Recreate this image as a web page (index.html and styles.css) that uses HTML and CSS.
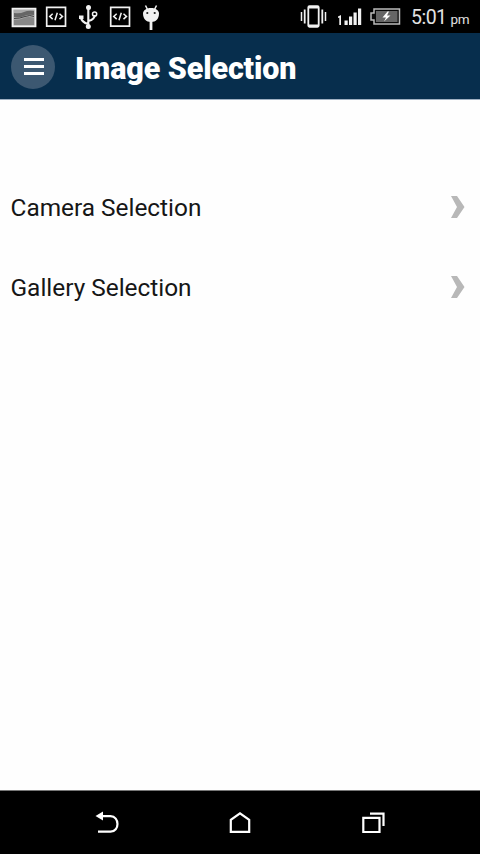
FILE: index.html
```html
<!DOCTYPE html>
<html lang="en">
<head>
<meta charset="utf-8">
<title>Image Selection</title>
<link rel="stylesheet" href="styles.css">
</head>
<body>
<div class="screen">
  <div class="status">
    <div class="notifications">
      <svg width="26" height="33" viewBox="11 0 26 33"><path d="M12.5 8.7h23v17.6h-23z" fill="#aaa" stroke="#f2f2f2" stroke-width="1.8"/><path d="M14 13q6 1 10-1t10-1v4q-6-1-10 1t-10 1z" fill="#666"/><path d="M14 20q6 0 10-2t10 0v7H14z" fill="#888"/><path d="M14 18.5q6 0 11-2t9 0" fill="none" stroke="#444"/></svg>
      <svg width="22" height="33" viewBox="45 0 22 33" fill="none" stroke="#f2f2f2"><path d="M46.7 7.3h18.8v18.8H46.7z" stroke-width="1.7"/><path d="M52.7 13.7l-3 2.7 3 2.7M59.5 13.7l3 2.7-3 2.7M57.3 12.7l-2.3 7.5" stroke-width="1.5"/></svg>
      <svg width="22" height="33" viewBox="77 0 22 33" fill="none" stroke="#f2f2f2" stroke-width="2.1"><path d="M88.3 9v17M88.3 24c-4-1-7-3-7.500-7M88.300 21c4-1 6.500-3 6.500-6"/><circle cx="88.500" cy="7.500" r="2.500" fill="#f2f2f2" stroke="none"/><circle cx="88.300" cy="26.500" r="2.500" fill="#f2f2f2" stroke="none"/><path d="M79 15.500h4.500v3.500H79z" fill="#f2f2f2" stroke="none"/><circle cx="94.600" cy="14" r="2.100" stroke-width="1.500"/></svg>
      <svg width="22" height="33" viewBox="45 0 22 33" fill="none" stroke="#f2f2f2"><path d="M46.7 7.3h18.8v18.8H46.7z" stroke-width="1.7"/><path d="M52.7 13.7l-3 2.7 3 2.7M59.5 13.7l3 2.7-3 2.7M57.3 12.7l-2.3 7.5" stroke-width="1.5"/></svg>
      <svg width="18" height="33" viewBox="143 0 18 33"><path d="M146.500 5.500l2 4M157.500 5.500l-2 4" stroke="#f2f2f2" stroke-width="1.500"/><path d="M144 13.500c0-3 3-5.500 8-5.500s8 2.500 8 5.500c0 5-3 8.500-8 8.500s-8-3.500-8-8.500z" fill="#f2f2f2"/><path d="M152 21v9" stroke="#f2f2f2" stroke-width="2.800"/><circle cx="148.300" cy="13" r="1.100" fill="#222"/><circle cx="155.700" cy="13" r="1.100" fill="#222"/></svg>
    </div>
    <div class="system">
      <svg class="vibrate" width="28" height="33" viewBox="299 0 28 33" fill="none" stroke="#f2f2f2"><rect x="308.300" y="6.200" width="10.400" height="20.600" rx="1.200" stroke-width="1.800"/><path d="M308 7.500h11M308 25.500h11" stroke-width="2"/><path d="M304.700 9.500v14M322.300 9.500v14" stroke-width="1.800"/><path d="M301.500 12v9M325.500 12v9" stroke-width="1.500"/></svg>
      <svg class="signal" width="25" height="33" viewBox="337 0 25 33" fill="#f2f2f2"><path d="M338 16.500l3-1.500v10h-1.700v-7.500l-1.300.5zM344.500 20.500h3.200V25h-3.200zM349 16.500h3.200V25H349zM353.500 12.500h3.200V25h-3.200zM358 8.500h3.200V25H358z"/></svg>
      <svg class="battery" width="32" height="33" viewBox="369 0 32 33"><path d="M374 9h25.500v15H374v-4h-3v-7h3z" fill="#0a0a0a" stroke="#bbb" stroke-width="1.500"/><path d="M376 11h21.500v11H376z" fill="#666"/><path d="M387.500 11.500l-5 6h3.500l-2 4 6.500-6H387l2-4z" fill="#fff"/></svg>
      <span class="clock">5:01</span><span class="meridiem">pm</span>
    </div>
  </div>
  <header class="header">
    <div class="menu"><i></i><i></i><i></i></div>
    <h1 class="title">Image Selection</h1>
  </header>
  <main class="list">
    <div class="row"><span>Camera Selection</span><svg width="16" height="24" viewBox="0 0 16 24"><path d="M1 1h6l7.500 11L7 23H1l6-11z" fill="#b8b8b8"/></svg></div>
    <div class="row"><span>Gallery Selection</span><svg width="16" height="24" viewBox="0 0 16 24"><path d="M1 1h6l7.500 11L7 23H1l6-11z" fill="#b8b8b8"/></svg></div>
  </main>
  <nav class="nav">
    <svg width="26" height="26" viewBox="94 809 26 26"><path d="M100 815.200h10.500c9.300 0 9.300 15.500 0 15.500H98" fill="none" stroke="#fff" stroke-width="2.200"/><path d="M95.500 815l7.500-4.500v9z" fill="#fff"/></svg>
    <svg width="26" height="26" viewBox="227 809 26 26"><path d="M230.800 830.900v-12l9.200-6.600 9.200 6.600v12z" fill="none" stroke="#fff" stroke-width="2.200"/></svg>
    <svg width="26" height="26" viewBox="360 809 26 26" fill="none" stroke="#fff" stroke-width="2.200"><path d="M363.300 816.800h16.200v14.200h-16.200zM370 812.600h13.500v12.500"/></svg>
  </nav>
</div>
</body>
</html>
```
FILE: styles.css
```css
* { box-sizing: border-box; }
body { margin: 0; background: #fefefe; color: #161616; font-family: Roboto, "Liberation Sans", sans-serif; }
svg { display: block; flex: none; }
.screen { height: 854px; display: flex; flex-direction: column; overflow: hidden; }
.status { height: 33px; flex: none; display: flex; justify-content: space-between; background: #000; padding: 0 11px; color: #e2e2e2; }
.notifications { display: flex; gap: 10px; }
.notifications svg:first-child { margin-right: -2px; }
.notifications svg:last-child { margin-left: 1px; }
.system { display: flex; align-items: baseline; white-space: nowrap; }
.system svg { align-self: flex-start; }
.vibrate { margin-right: 10px; }
.signal { margin-right: 7px; }
.battery { margin-right: 10px; }
.clock { font-size: 19.5px; line-height: 36px; letter-spacing: -0.5px; margin-right: 4px; }
.meridiem { font-size: 13.5px; letter-spacing: -0.5px; }
.header { height: 67px; flex: none; display: flex; align-items: center; background: #072e4d; border-bottom: 1px solid #9fb0c2; padding-left: 11px; }
.menu { width: 44px; height: 44px; margin-top: 1px; border-radius: 50%; background: #3c5871; display: flex; flex-direction: column; align-items: center; justify-content: center; gap: 4px; }
.menu i { width: 20px; height: 3px; margin-left: 1px; background: #fff; }
.title { margin: 5px 0 0 20px; font-size: 30.5px; line-height: 36px; font-weight: 900; letter-spacing: -0.13px; color: #fff; white-space: nowrap; }
.list { flex: 1; padding-top: 67px; }
.row { height: 80px; display: flex; align-items: center; justify-content: space-between; padding: 0 14px 0 10.5px; font-size: 24.4px; }
.row span { padding-top: 1px; }
.nav { height: 64px; flex: none; background: #000; border-top: 1px solid #777; display: flex; align-items: center; justify-content: center; gap: 107px; }
```
